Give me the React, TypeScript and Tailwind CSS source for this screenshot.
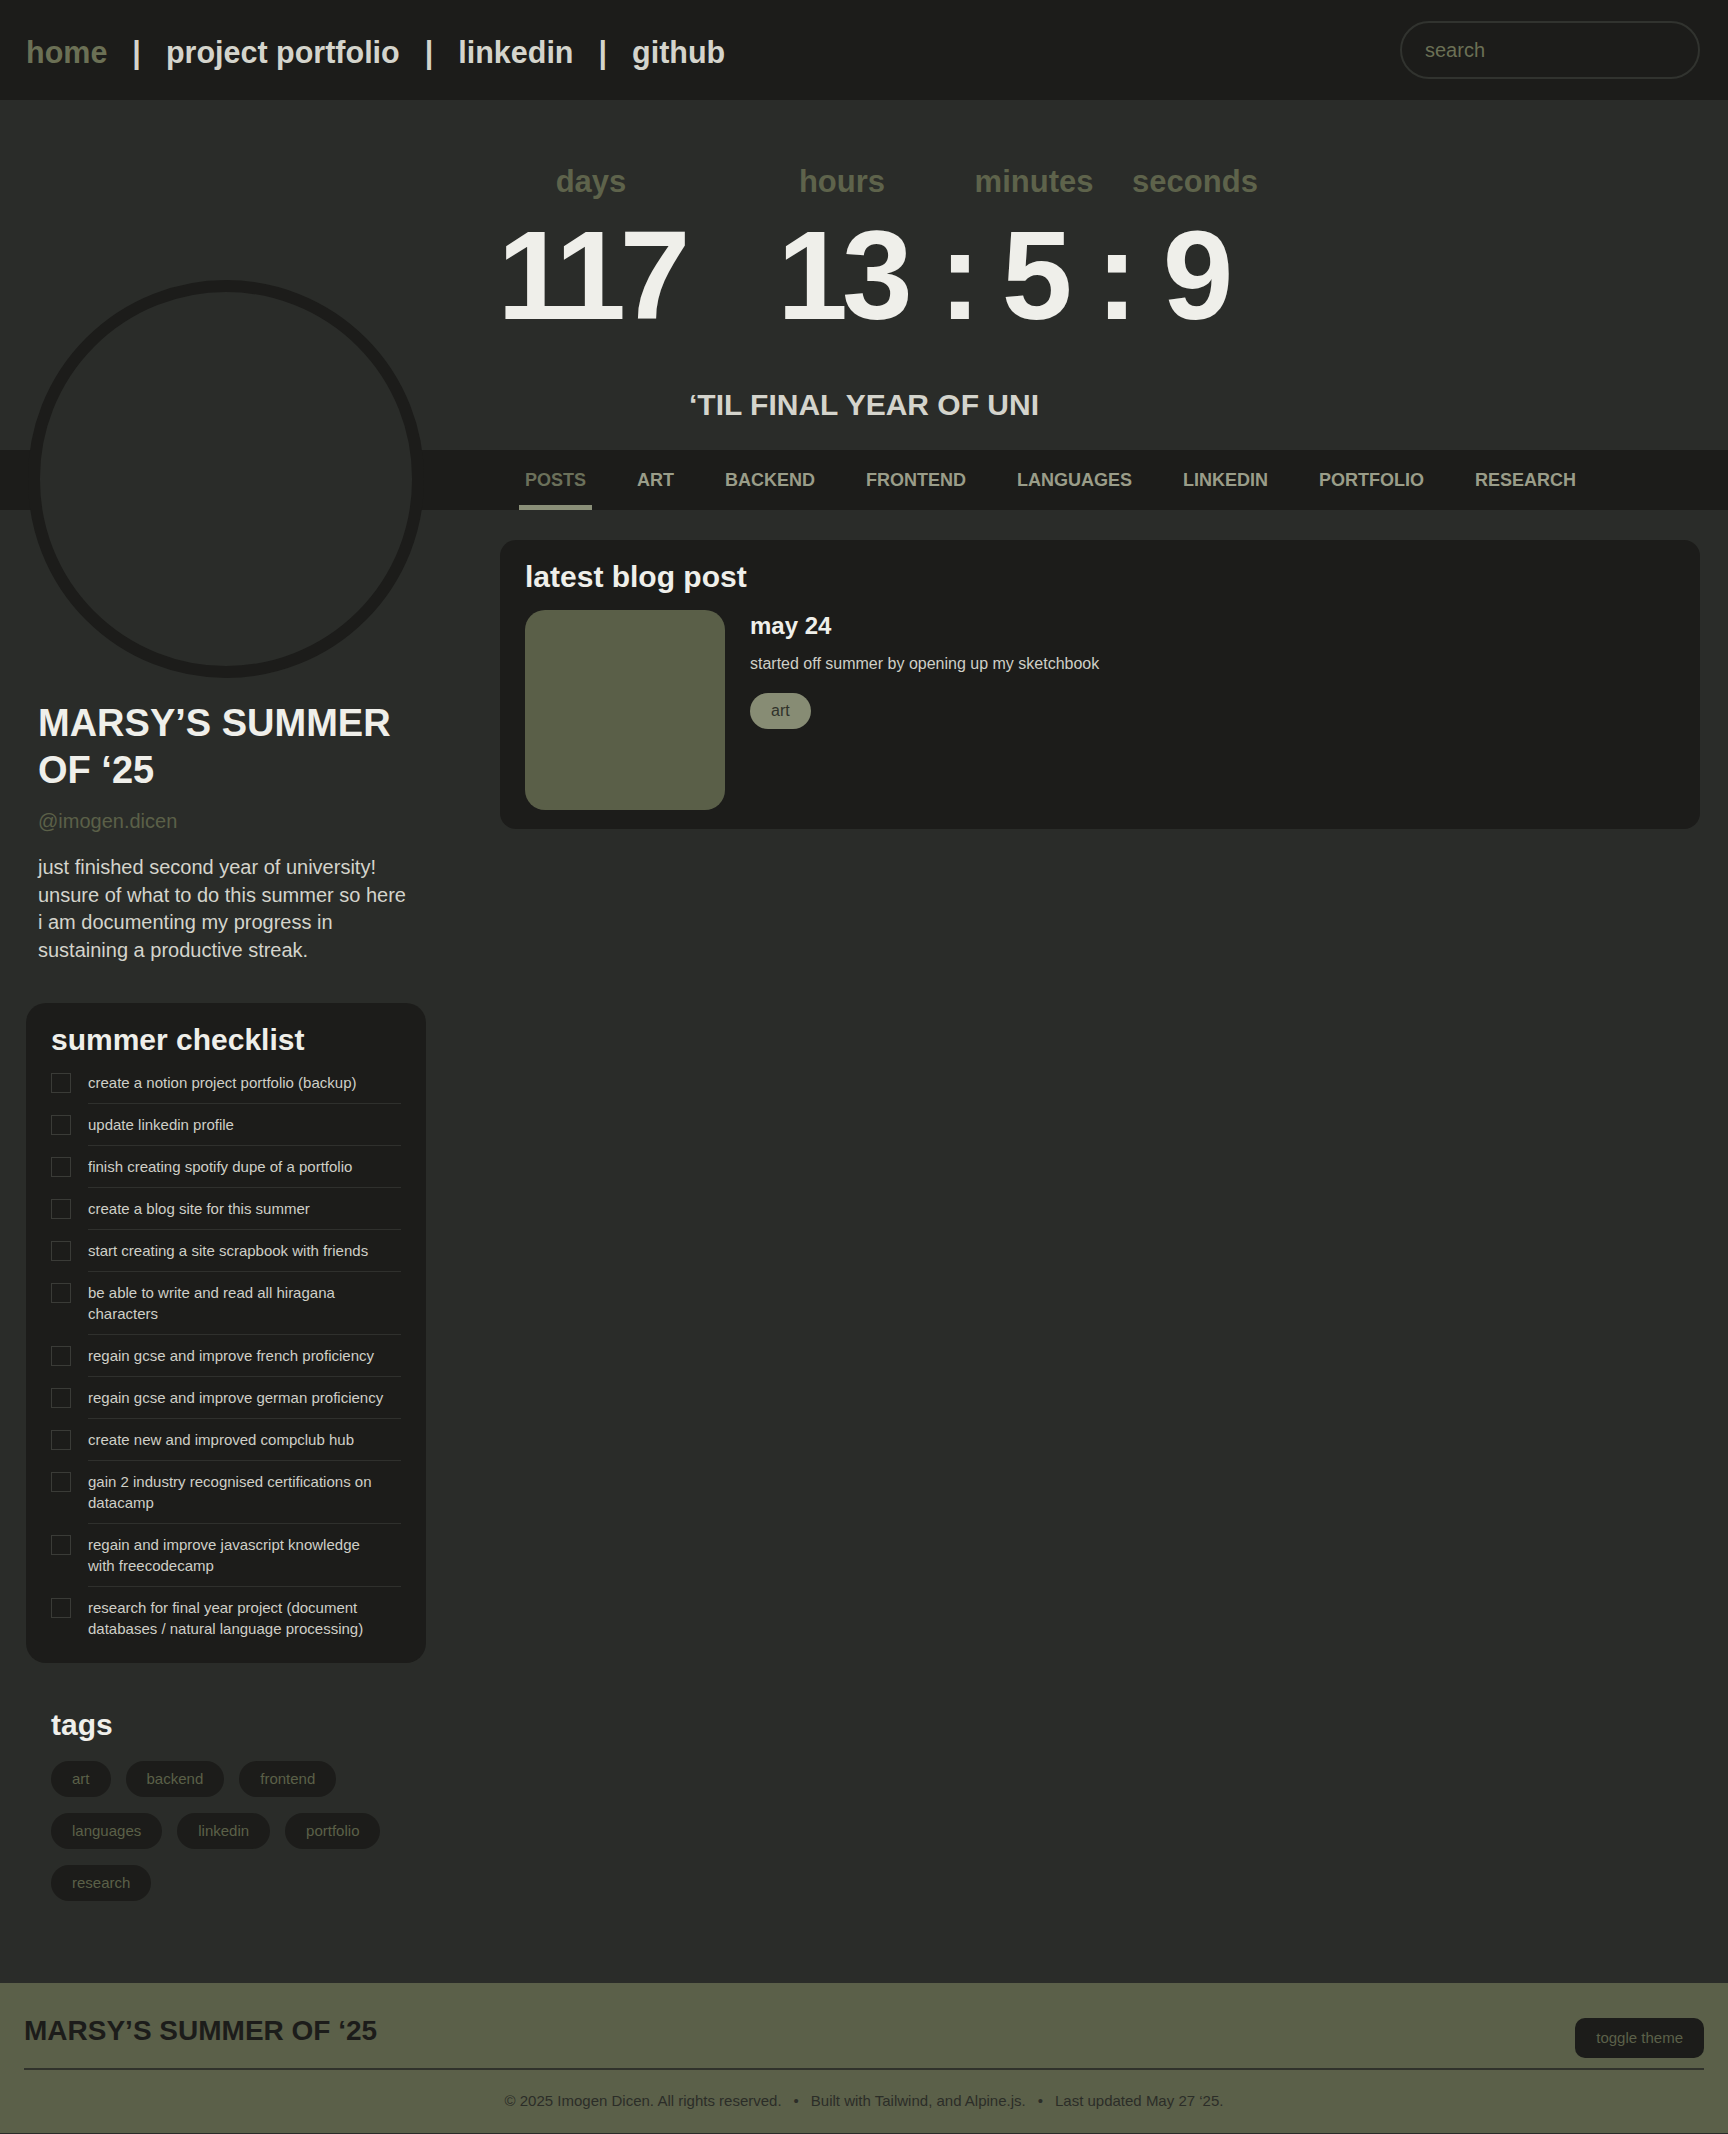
import React from 'react';

const checklist: string[] = [
  'create a notion project portfolio (backup)',
  'update linkedin profile',
  'finish creating spotify dupe of a portfolio',
  'create a blog site for this summer',
  'start creating a site scrapbook with friends',
  'be able to write and read all hiragana characters',
  'regain gcse and improve french proficiency',
  'regain gcse and improve german proficiency',
  'create new and improved compclub hub',
  'gain 2 industry recognised certifications on datacamp',
  'regain and improve javascript knowledge with freecodecamp',
  'research for final year project (document databases / natural language processing)',
];

const tabs = ['POSTS', 'ART', 'BACKEND', 'FRONTEND', 'LANGUAGES', 'LINKEDIN', 'PORTFOLIO', 'RESEARCH'];
const tags = ['art', 'backend', 'frontend', 'languages', 'linkedin', 'portfolio', 'research'];

interface UnitProps {
  label?: string;
  value: string;
  className: string;
}

const Unit = ({ label, value, className }: UnitProps) => (
  <div className={`flex flex-col items-center ${className}`}>
    {label && (
      <div className="mb-[12px] text-[31px] leading-[37px] font-bold text-[#5e634b]">{label}</div>
    )}
    <div className="text-[127px] leading-none font-bold tracking-[-6px] text-[#efefea]">{value}</div>
  </div>
);

const App = () => {
  return (
    <div className="min-h-screen bg-[#2a2c29] font-['Liberation_Sans',Arial,sans-serif]">
      {/* Header */}
      <header className="h-[100px] bg-[#1c1c1a] flex items-center justify-between pl-[26px] pr-[28px]">
        <nav className="flex items-center gap-[25px] pt-[3px] text-[30.5px] leading-9 font-bold text-[#d4d4cc]">
          <a className="text-[#6b7055]">home</a>
          <span>|</span>
          <a>project portfolio</a>
          <span>|</span>
          <a>linkedin</a>
          <span>|</span>
          <a>github</a>
        </nav>
        <input
          placeholder="search"
          className="w-[300px] h-[58px] rounded-full border-2 border-[#31332f] bg-transparent pl-[23px] text-[20px] text-[#d4d4cc] outline-none placeholder:text-[#6b7055]"
        />
      </header>

      {/* Countdown */}
      <section className="pt-[63px] pb-[27px]">
        <div className="flex items-end justify-center pl-[25px]">
          <Unit label="days" value="117" className="w-[190px]" />
          <Unit label="hours" value="13" className="ml-[91px] w-[130px]" />
          <Unit value=":" className="ml-[40px] w-[20px]" />
          <Unit label="minutes" value="5" className="ml-[8px] w-[118px]" />
          <Unit value=":" className="ml-[11px] w-[20px]" />
          <Unit label="seconds" value="9" className="ml-[9px] w-[124px]" />
        </div>
        <p className="mt-[48px] text-center text-[30px] leading-9 font-bold text-[#d4d4cc]">‘TIL FINAL YEAR OF UNI</p>
      </section>

      {/* Tab bar */}
      <div className="h-[60px] bg-[#1c1c1a] grid grid-cols-[400px_1fr] gap-x-[74px] px-[26px]">
        <div />
        <nav className="ml-[19px] flex gap-[39px]">
          {tabs.map((tab, i) => (
            <button
              key={tab}
              className={`h-[60px] px-[6px] pt-[5px] border-b-[5px] text-[18px] leading-7 font-bold ${
                i === 0 ? 'border-[#8a8f78] text-[#6b705a]' : 'border-transparent text-[#9a9d89]'
              }`}
            >
              {tab}
            </button>
          ))}
        </nav>
      </div>

      {/* Content */}
      <div className="grid grid-cols-[400px_1fr] gap-x-[74px] pl-[26px] pr-[28px] pb-[82px]">
        <aside>
          <div className="relative z-10 -mt-[230px] mx-auto w-[396px] h-[398px] rounded-full border-[12px] border-[#1c1c1a] bg-[#2a2c29]" />
          <div className="px-3">
            <h1 className="mt-[22px] text-[38px] leading-[47px] font-bold text-[#efefea]">MARSY’S SUMMER OF ‘25</h1>
            <p className="mt-[13px] text-xl text-[#5b6048]">@imogen.dicen</p>
            <p className="mt-[19px] text-xl leading-[27.5px] text-[#d4d4cc]">
              just finished second year of university! unsure of what to do this summer so here i am documenting my
              progress in sustaining a productive streak.
            </p>
          </div>

          {/* Checklist */}
          <div className="mt-[39px] rounded-[20px] bg-[#1c1c1a] px-[25px] pt-[19px] pb-[14px]">
            <h2 className="mb-1 text-3xl font-bold text-[#efefea]">summer checklist</h2>
            <ul>
              {checklist.map((item, i) => (
                <li key={i} className="flex gap-[17px]">
                  <span className="mt-[11px] w-5 h-5 shrink-0 border border-[#3a3b37]" />
                  <span
                    className={`flex-1 py-[10px] pr-3 text-[15px] leading-[21px] text-[#cfcfc7] ${
                      i < checklist.length - 1 ? 'border-b border-[#2f302d]' : ''
                    }`}
                  >
                    {item}
                  </span>
                </li>
              ))}
            </ul>
          </div>

          {/* Tags */}
          <div className="mt-[44px] px-[25px]">
            <h2 className="mb-[18px] text-3xl font-bold text-[#efefea]">tags</h2>
            <div className="flex flex-wrap gap-x-[15px] gap-y-4">
              {tags.map((tag) => (
                <span
                  key={tag}
                  className="h-9 px-[21px] flex items-center rounded-full bg-[#1c1c1a] text-[15px] text-[#5b6048]"
                >
                  {tag}
                </span>
              ))}
            </div>
          </div>
        </aside>

        <main className="pt-[30px]">
          <div className="rounded-2xl bg-[#1c1c1a] px-[25px] pt-[19px] pb-[19px]">
            <h2 className="mb-[15px] text-3xl font-bold text-[#efefea]">latest blog post</h2>
            <div className="flex gap-[25px]">
              <div className="w-[200px] h-[200px] rounded-[20px] bg-[#5a5f48]" />
              <div>
                <h3 className="text-2xl font-bold text-[#efefea]">may 24</h3>
                <p className="mt-[10px] text-base text-[#cfcfc7]">started off summer by opening up my sketchbook</p>
                <span className="mt-[17px] inline-flex h-9 px-[21px] items-center rounded-full bg-[#878c74] text-base text-[#30322b]">
                  art
                </span>
              </div>
            </div>
          </div>
        </main>
      </div>

      {/* Footer */}
      <footer className="bg-[#5b6049] px-6 pt-[31px] pb-[22px]">
        <div className="flex items-start justify-between">
          <h2 className="text-[28px] leading-[34px] font-bold text-[#1c1c1a]">MARSY’S SUMMER OF ‘25</h2>
          <button className="mt-[4px] h-10 px-[21px] rounded-[10px] bg-[#1c1c1a] text-[15px] text-[#5b6049]">
            toggle theme
          </button>
        </div>
        <div className="mt-[10px] border-t-2 border-[#30322b]" />
        <div className="mt-5 flex justify-center gap-[12px] text-[15px] leading-[21px] text-[#2b2d28]">
          <span>© 2025 Imogen Dicen. All rights reserved.</span>
          <span>•</span>
          <span>Built with Tailwind, and Alpine.js.</span>
          <span>•</span>
          <span>Last updated May 27 ‘25.</span>
        </div>
      </footer>
    </div>
  );
};

export default App;
